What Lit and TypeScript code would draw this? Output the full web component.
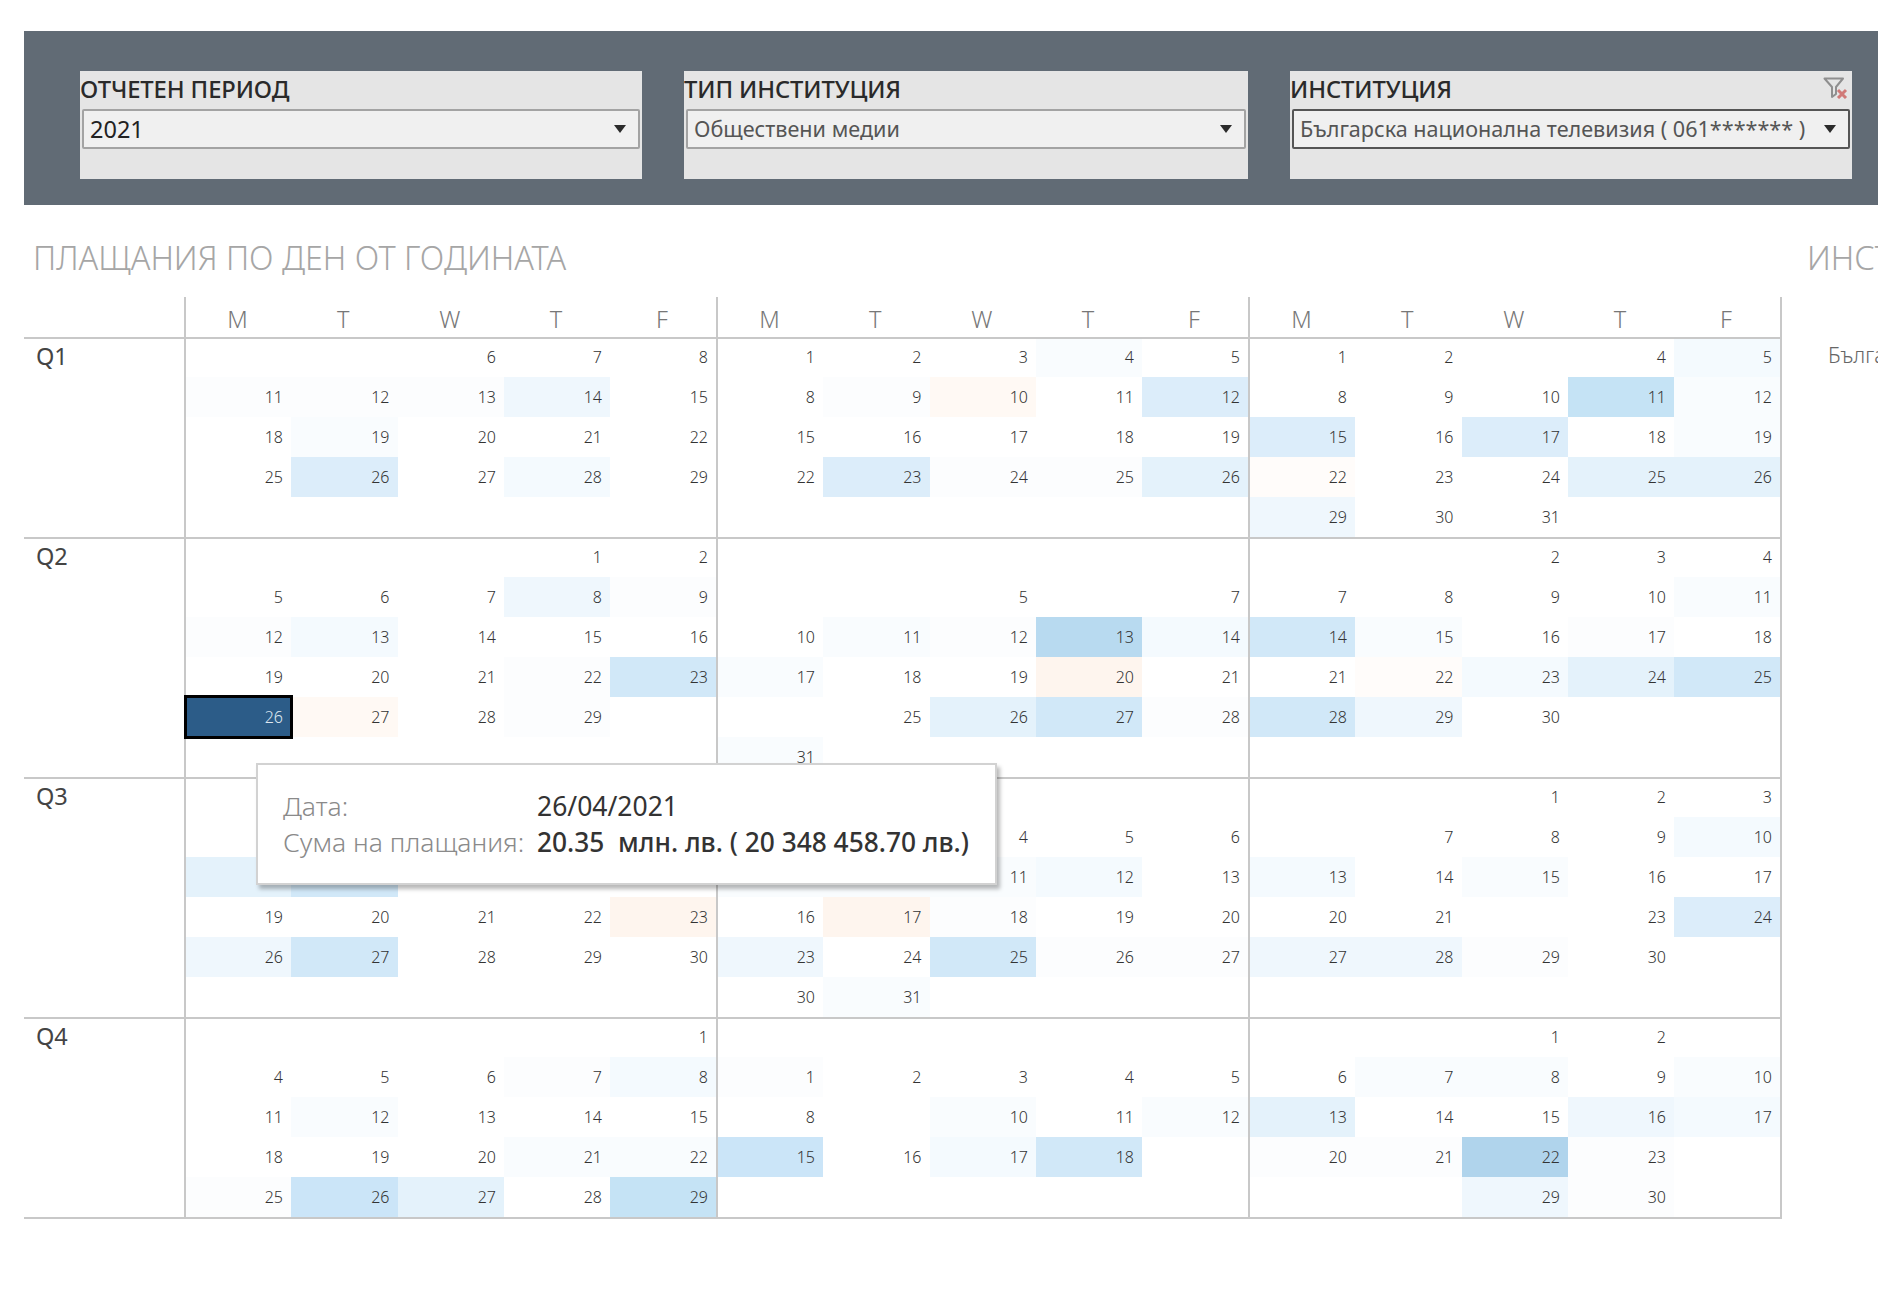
import { LitElement, html, css } from "lit";
import { customElement } from "lit/decorators.js";

// tint letter after a day number, rows split by |
const TINTS: Record<string, string> = {
  w: "#fcfdfe",
  a: "#f9fcfe",
  b: "#f4fafe",
  c: "#eff7fd",
  d: "#e4f2fb",
  e: "#dcedfa",
  f: "#d1e8f8",
  g: "#cbe5f8",
  h: "#c5e3f5",
  i: "#b8daf0",
  j: "#b0d4ec",
  o: "#fff9f4",
  p: "#fef5ee",
  q: "#fffcfa",
  s: "#2c5c88",
};

const QUARTERS = [
  {
    label: "Q1",
    months: [
      ",,6,7,8|11w,12w,13w,14c,15|18,19a,20,21,22|25,26e,27,28b,29|,,,,",
      "1,2,3,4a,5|8,9w,10o,11,12e|15,16,17,18,19|22,23e,24w,25w,26d|,,,,",
      "1,2,,4,5b|8,9,10,11h,12a|15e,16,17e,18,19a|22q,23,24,25d,26d|29c,30,31,,",
    ],
  },
  {
    label: "Q2",
    months: [
      ",,,1,2|5,6,7,8c,9w|12w,13b,14,15,16|19,20,21,22w,23f|26s,27o,28,29w,|,,,,",
      ",,,,|,,5,,7|10,11a,12w,13i,14b|17a,18,19,20p,21|,25,26d,27f,28w|31a,,,,",
      ",,2,3,4|7,8,9,10,11a|14f,15a,16,17w,18|21,22q,23b,24d,25f|28f,29c,30,,|,,,,",
    ],
  },
  {
    label: "Q3",
    months: [
      ",,,,|,,,,|d,f,,,|19,20,21,22,23p|26c,27f,28,29,30|,,,,",
      ",,,,|,,4,5,6|a,a,11a,12b,13|16,17p,18w,19,20|23c,24,25f,26w,27w|30,31a,,,",
      ",,1,2,3|,7,8,9,10b|13b,14,15a,16,17|20,21,,23,24e|27c,28c,29w,30,|,,,,",
    ],
  },
  {
    label: "Q4",
    months: [
      ",,,,1|4,5,6,7w,8b|11,12a,13,14,15|18,19,20,21a,22a|25w,26g,27d,28,29h",
      ",,,,|1w,2,3,4,5|8,,10a,11,12a|15g,16,17b,18f,|,,,,",
      ",,1,2,|6,7a,8a,9,10a|13d,14,15,16c,17b|20w,21w,22j,23w,|,,29c,30w,",
    ],
  },
];

const DAYS = ["M", "T", "W", "T", "F"];

@customElement("app-root")
export class AppRoot extends LitElement {
  static styles = css`
    :host {
      display: block;
      width: 1878px;
      height: 1304px;
      overflow: hidden;
      position: relative;
      background: #fff;
      font-family: "Noto Sans", sans-serif;
      padding: 31px 0 0 24px;
      box-sizing: border-box;
    }
    .banner {
      display: flex;
      gap: 42px;
      height: 174px;
      padding: 40px 26px 26px 56px;
      box-sizing: border-box;
      background: #616b75;
    }
    .filter {
      position: relative;
      width: 562px;
      background: #e5e5e5;
    }
    .filter.wide {
      width: 564px;
    }
    .filter-title {
      height: 38px;
      line-height: 37px;
      font-size: 23.8px;
      font-weight: 500;
      letter-spacing: -0.1px;
      color: #2a2a2a;
      white-space: nowrap;
    }
    .select {
      display: flex;
      align-items: center;
      justify-content: space-between;
      height: 40px;
      margin: 0 2px;
      padding: 0 12px 1px 6px;
      box-sizing: border-box;
      border: 2px solid #a3a3a3;
      border-radius: 2px;
      background: #f0f0f0;
      font-size: 21.6px;
      color: #555;
      white-space: nowrap;
    }
    .select.dark {
      border-color: #555;
    }
    .select.year {
      color: #222;
      font-size: 23.5px;
    }
    .arrow {
      width: 12px;
      height: 8px;
      flex: none;
    }
    .clear {
      position: absolute;
      top: 6px;
      right: 4px;
      width: 25px;
      height: 22px;
    }
    .content {
      display: flex;
    }
    .main {
      flex: none;
      width: 1758px;
    }
    .title {
      height: 92px;
      padding: 32px 0 0 9px;
      box-sizing: border-box;
      font-size: 32.4px;
      line-height: 40px;
      font-weight: 300;
      color: #a6a6a6;
      white-space: nowrap;
    }
    .row {
      display: grid;
      grid-template-columns: 160px repeat(3, 532px) 2px;
    }
    .head {
      height: 40px;
    }
    .label {
      padding: 0 0 0 12px;
      font-size: 23.5px;
      line-height: 35px;
      color: #444;
    }
    .month {
      display: grid;
      grid-template-columns: 105px 106.5px 106.5px 106px 106px;
      grid-auto-rows: 40px;
      border-left: 2px solid #c8c8c8;
    }
    .q {
      border-top: 2px solid #c8c8c8;
    }
    .q .month {
      grid-template-rows: 38px;
    }
    .q:last-child {
      border-bottom: 2px solid #c8c8c8;
    }
    .end {
      width: 2px;
      background: #c8c8c8;
    }
    .dow {
      padding: 2px 2px 0 0;
      text-align: center;
      font-size: 23.5px;
      font-weight: 300;
      line-height: 40px;
      color: #777;
    }
    .cell {
      padding: 0 8px 1px 0;
      box-sizing: border-box;
      display: flex;
      align-items: center;
      justify-content: flex-end;
      font-size: 16px;
      font-weight: 300;
      color: #333;
    }
    .cell:nth-child(-n + 5) {
      padding-bottom: 2px;
    }
    .cell.selected {
      position: relative;
      z-index: 1;
      color: #dfe8f0;
      outline: 3px solid #000;
      outline-offset: -1px;
    }
    .side {
      padding-left: 25px;
      white-space: nowrap;
    }
    .side .title {
      padding-left: 0;
    }
    .side-item {
      padding: 40px 0 0 21px;
      font-size: 21px;
      line-height: 36px;
      font-weight: 300;
      color: #666;
    }
    .tooltip {
      position: absolute;
      left: 256px;
      top: 763px;
      display: grid;
      grid-template-columns: 254px auto;
      align-content: center;
      width: 741px;
      height: 122px;
      padding: 0 0 0 25px;
      box-sizing: border-box;
      border: 2px solid #d2d2d2;
      background: #fff;
      box-shadow: 3px 4px 4px rgba(0, 0, 0, 0.28);
      font-size: 26.5px;
      line-height: 36px;
      white-space: pre;
      z-index: 2;
    }
    .tip-key {
      color: #8a8a8a;
      font-weight: 300;
    }
    .tip-val {
      color: #333;
    }
    .tip-val.sum {
      font-weight: 500;
      font-size: 26.3px;
    }
  `;

  private arrow() {
    return html`<svg class="arrow" viewBox="0 0 12 8"><path d="M0 0H12L6 8Z" fill="#2b2b2b" /></svg>`;
  }

  private cells(month: string) {
    return month.split("|").flatMap((row) =>
      row.split(",").map((item) => {
        const day = item.replace(/[a-z]/g, "");
        const tint = item.replace(/[0-9]/g, "");
        const bg = tint ? `background:${TINTS[tint]}` : "";
        return html`<div class="cell ${tint === "s" ? "selected" : ""}" style=${bg}>${day}</div>`;
      })
    );
  }

  render() {
    return html`
      <div class="banner">
        <div class="filter">
          <div class="filter-title">ОТЧЕТЕН ПЕРИОД</div>
          <div class="select year">2021 ${this.arrow()}</div>
        </div>
        <div class="filter wide">
          <div class="filter-title">ТИП ИНСТИТУЦИЯ</div>
          <div class="select">Обществени медии ${this.arrow()}</div>
        </div>
        <div class="filter">
          <div class="filter-title">ИНСТИТУЦИЯ</div>
          <svg class="clear" viewBox="0 0 25 22">
            <path d="M1.5 1.5H20L13 10V17L9 20V10Z" fill="none" stroke="#8f8f8f" stroke-width="2" stroke-linejoin="round" />
            <path d="M15 13L23 21M23 13L15 21" stroke="#d07a78" stroke-width="3" />
          </svg>
          <div class="select dark">Българска национална телевизия ( 061******* ) ${this.arrow()}</div>
        </div>
      </div>
      <div class="content">
        <div class="main">
          <div class="title">ПЛАЩАНИЯ ПО ДЕН ОТ ГОДИНАТА</div>
          <div class="row head">
            <div></div>
            ${[0, 1, 2].map(
              () => html`<div class="month">${DAYS.map((d) => html`<div class="dow">${d}</div>`)}</div>`
            )}
            <div class="end"></div>
          </div>
          ${QUARTERS.map(
            (q) => html`
              <div class="row q">
                <div class="label">${q.label}</div>
                ${q.months.map((m) => html`<div class="month">${this.cells(m)}</div>`)}
                <div class="end"></div>
              </div>
            `
          )}
        </div>
        <div class="side">
          <div class="title">ИНСТИТУЦИЯ</div>
          <div class="side-item">Българска национална телевизия</div>
        </div>
      </div>
      <div class="tooltip">
        <div class="tip-key">Дата:</div>
        <div class="tip-val">26/04/2021</div>
        <div class="tip-key">Сума на плащания:</div>
        <div class="tip-val sum">20.35  млн. лв. ( 20 348 458.70 лв.)</div>
      </div>
    `;
  }
}
